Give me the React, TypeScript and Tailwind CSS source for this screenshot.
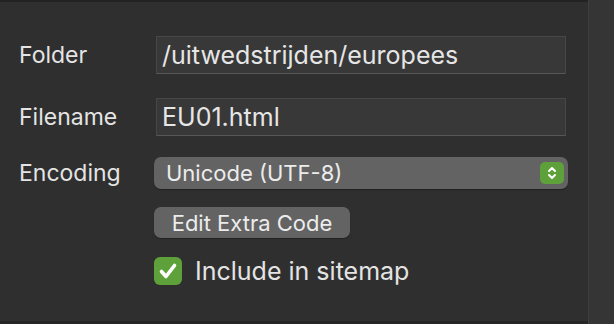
import React from "react";

const font = { fontFamily: "Inter, 'Noto Sans', sans-serif" };

function Field({ value }: { value: string }) {
  return (
    <div className="ml-[2px] flex h-[38px] w-[410px] items-center border border-[#474747] border-b-[#575757] bg-[#383838] px-[5px] text-[25px] leading-none text-[#e6e6e6]">
      {value}
    </div>
  );
}

export default function App() {
  return (
    <div
      className="flex h-[324px] w-[614px] overflow-hidden bg-[#2f2f2f] text-[#e4e4e4]"
      style={font}
    >
      <div className="flex flex-1 flex-col border-t-2 border-b-[3px] border-t-[#222] border-b-[#262626] pl-[19px] pt-[34px]">
        <div className="grid grid-cols-[135px_414px] items-center gap-y-[24px]">
          <span className="text-[23px] leading-none">Folder</span>
          <Field value="/uitwedstrijden/europees" />
          <span className="text-[23px] leading-none">Filename</span>
          <Field value="EU01.html" />
        </div>

        <div className="mt-[21px] grid grid-cols-[135px_414px] items-center">
          <span className="text-[23px] leading-none">Encoding</span>
          <div className="flex h-[32px] w-[414px] items-center justify-between rounded-[7px] bg-[#636363] pl-[12px] pr-[4px] text-[22px] leading-none text-[#ececec] shadow-[0_1px_1px_rgba(0,0,0,0.3)]">
            <span>Unicode (UTF-8)</span>
            <span className="flex h-[22px] w-[24px] items-center justify-center rounded-[5px] bg-[#5ea13a]">
              <svg width="12" height="16" viewBox="0 0 12 16" fill="none" stroke="#fff" strokeWidth="2" strokeLinecap="round" strokeLinejoin="round">
                <path d="M3 6l3-3 3 3" />
                <path d="M3 10l3 3 3-3" />
              </svg>
            </span>
          </div>
        </div>

        <div className="mt-[18px] pl-[135px]">
          <button className="flex h-[31px] w-[196px] items-center justify-center rounded-[7px] bg-[#636363] text-[22px] leading-none text-[#ececec] shadow-[0_1px_1px_rgba(0,0,0,0.3)]">
            Edit Extra Code
          </button>
        </div>

        <div className="mt-[19px] flex items-center gap-[13px] pl-[135px]">
          <span className="flex h-[28px] w-[28px] items-center justify-center rounded-[6px] bg-[#5ea13a]">
            <svg width="22" height="22" viewBox="0 0 22 22" fill="none" stroke="#fff" strokeWidth="3.6" strokeLinecap="round" strokeLinejoin="round">
              <path d="M4.5 11.5l4.5 5 8.5-11" />
            </svg>
          </span>
          <span className="text-[25px] leading-none">Include in sitemap</span>
        </div>
      </div>
      <div className="h-full w-[26px] border-l border-[#3f3f3f] bg-[#353535]" />
    </div>
  );
}
